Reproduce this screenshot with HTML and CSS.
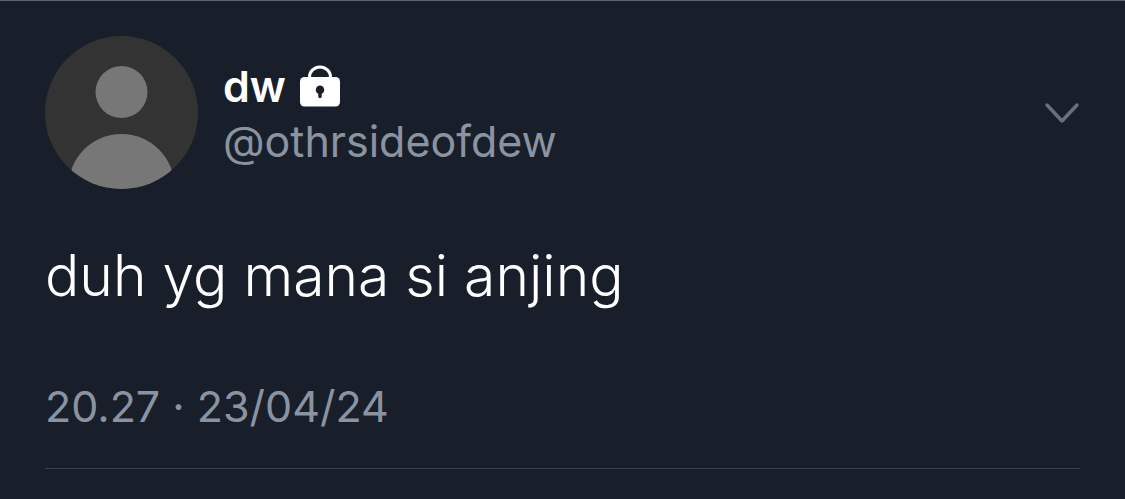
FILE: index.html
```html
<!DOCTYPE html>
<html lang="id">
<head>
<meta charset="utf-8">
<meta name="viewport" content="width=device-width, initial-scale=1">
<title>dw (@othrsideofdew)</title>
<link rel="stylesheet" href="styles.css">
</head>
<body>
<article class="post">
  <header class="author">
    <svg class="avatar" viewBox="0 0 153 153" aria-hidden="true">
      <defs><clipPath id="disc"><circle cx="76.500" cy="76.500" r="76.500"/></clipPath></defs>
      <g clip-path="url(#disc)">
        <rect width="153" height="153" fill="#333"/>
        <circle cx="76.500" cy="56" r="26" fill="#777"/>
        <circle cx="76.500" cy="151" r="53" fill="#777"/>
      </g>
    </svg>
    <div class="names">
      <div class="name-row">
        <span class="name">dw</span>
        <svg class="lock" viewBox="0 0 42 42" role="img" aria-label="Protected">
          <path d="M10.500 14V12a10.500 10 0 0 1 21 0v2" fill="none" stroke="#fff" stroke-width="3"/>
          <rect x="1" y="12" width="40" height="29.500" rx="4.500" fill="#fff"/>
          <path d="M21 20.500a4.300 4.300 0 0 1 1.700 8.200V31.500a1.700 1.700 0 0 1-3.400 0v-2.800A4.300 4.300 0 0 1 21 20.500z" fill="#181f2a"/>
        </svg>
      </div>
      <a class="handle" href="#">@othrsideofdew</a>
    </div>
    <button class="more" aria-label="More options">
      <svg viewBox="0 0 36 22" aria-hidden="true"><path d="M3 3l15 16L33 3" fill="none" stroke="#67707c" stroke-width="3.500" stroke-linecap="round" stroke-linejoin="round"/></svg>
    </button>
  </header>
  <p class="text">duh yg mana si anjing</p>
  <time class="date" datetime="2024-04-23T20:27">20.27 · 23/04/24</time>
</article>
</body>
</html>
```
FILE: styles.css
```css
* { box-sizing: border-box; }
body {
  margin: 0;
  min-height: 100vh;
  background: #181f2a;
  border-top: 1px solid #5b6471;
  font-family: Inter, "Liberation Sans", sans-serif;
  color: #fff;
}
.post {
  margin: 0 45px;
  padding-top: 35px;
  border-bottom: 1px solid #38404b;
}
.author { display: flex; align-items: center; }
.avatar { width: 153px; height: 153px; flex: none; }
.names { margin-left: 25px; padding-top: 2px; flex: 1; }
.name-row { display: flex; align-items: center; gap: 13px; height: 54px; }
.name { font-size: 43px; font-weight: 600; line-height: 54px; }
.lock { width: 42px; height: 42px; }
.handle {
  display: block;
  font-size: 43px;
  line-height: 56px;
  color: #8b93a1;
  text-decoration: none;
}
.more { padding: 0; border: 0; background: none; cursor: pointer; }
.more svg { display: block; width: 36px; height: 22px; }
.text { margin: 47px 0 0; font-size: 57px; font-weight: 300; line-height: 80px; }
.date {
  display: block;
  padding: 64px 0 36px;
  font-size: 43px;
  line-height: 52px;
  color: #8b93a1;
}
```
